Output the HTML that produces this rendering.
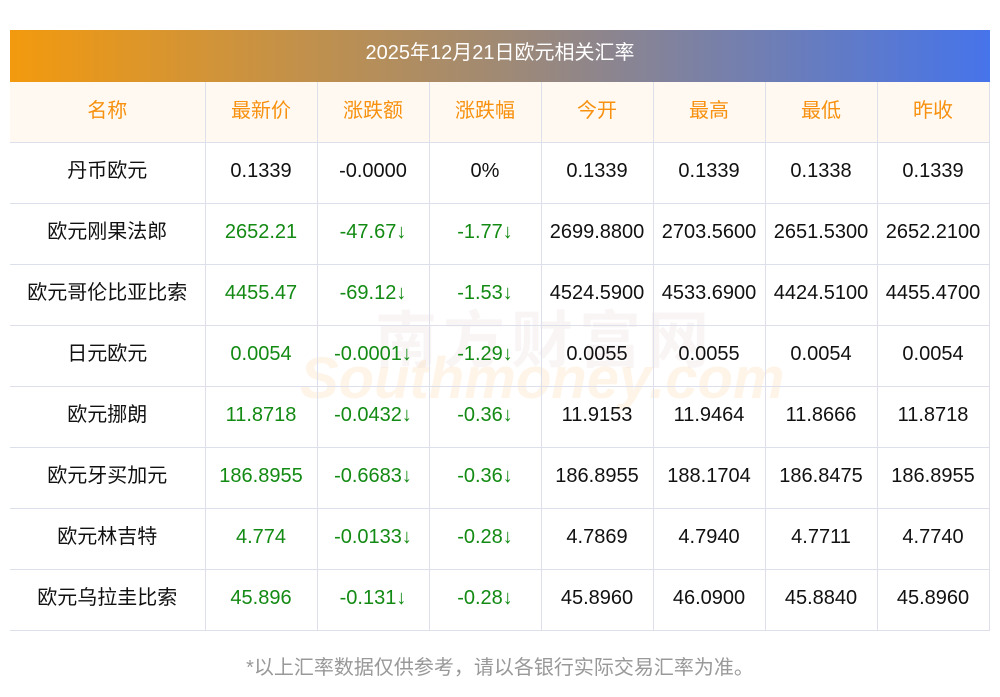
<!DOCTYPE html>
<html><head><meta charset="utf-8"><style>
body{margin:0;background:#fff;font-family:"Liberation Sans","Noto Sans CJK SC",sans-serif;width:1000px;height:697px;position:relative;overflow:hidden}
.title{position:absolute;left:10px;top:30px;width:980px;height:52px;background:linear-gradient(90deg,#f39a0e,#a08a74 50%,#4674ea);color:#fff;font-size:20px;line-height:46px;text-align:center}
table{position:absolute;left:10px;top:82px;border-collapse:collapse;width:979px;table-layout:fixed}
td{height:61px;border-right:1px solid #dde0ea;border-bottom:1px solid #dde0ea;text-align:center;font-size:20px;color:#111;padding:0 0 3px 0;white-space:nowrap;box-sizing:border-box}
td span{position:relative;top:-3px}
tr.h td{background:#fff9f2;color:#f7910f;height:60px;padding-bottom:0}
td.g{color:#138a13}
.wm{position:absolute;font-weight:bold;color:rgba(220,200,200,0.18);pointer-events:none}
.foot{position:absolute;top:651px;left:0;width:1000px;text-align:center;color:#999;font-size:20px}
</style></head><body>
<div class="title">2025年12月21日欧元相关汇率</div>
<div class="wm" style="left:375px;top:290px;font-size:62px;letter-spacing:6px">南方财富网</div>
<div class="wm" style="left:300px;top:345px;font-size:58px;font-style:italic;color:rgba(250,200,140,0.2)">Southmoney.com</div>
<table>
<colgroup><col style="width:195px"><col style="width:112px"><col style="width:112px"><col style="width:112px"><col style="width:112px"><col style="width:112px"><col style="width:112px"><col style="width:112px"></colgroup>
<tr class="h"><td><span>名称</span></td><td><span>最新价</span></td><td><span>涨跌额</span></td><td><span>涨跌幅</span></td><td><span>今开</span></td><td><span>最高</span></td><td><span>最低</span></td><td><span>昨收</span></td></tr>
<tr><td><span>丹币欧元</span></td><td>0.1339</td><td>-0.0000</td><td>0%</td><td>0.1339</td><td>0.1339</td><td>0.1338</td><td>0.1339</td></tr>
<tr><td><span>欧元刚果法郎</span></td><td class="g">2652.21</td><td class="g">-47.67↓</td><td class="g">-1.77↓</td><td>2699.8800</td><td>2703.5600</td><td>2651.5300</td><td>2652.2100</td></tr>
<tr><td><span>欧元哥伦比亚比索</span></td><td class="g">4455.47</td><td class="g">-69.12↓</td><td class="g">-1.53↓</td><td>4524.5900</td><td>4533.6900</td><td>4424.5100</td><td>4455.4700</td></tr>
<tr><td><span>日元欧元</span></td><td class="g">0.0054</td><td class="g">-0.0001↓</td><td class="g">-1.29↓</td><td>0.0055</td><td>0.0055</td><td>0.0054</td><td>0.0054</td></tr>
<tr><td><span>欧元挪朗</span></td><td class="g">11.8718</td><td class="g">-0.0432↓</td><td class="g">-0.36↓</td><td>11.9153</td><td>11.9464</td><td>11.8666</td><td>11.8718</td></tr>
<tr><td><span>欧元牙买加元</span></td><td class="g">186.8955</td><td class="g">-0.6683↓</td><td class="g">-0.36↓</td><td>186.8955</td><td>188.1704</td><td>186.8475</td><td>186.8955</td></tr>
<tr><td><span>欧元林吉特</span></td><td class="g">4.774</td><td class="g">-0.0133↓</td><td class="g">-0.28↓</td><td>4.7869</td><td>4.7940</td><td>4.7711</td><td>4.7740</td></tr>
<tr><td><span>欧元乌拉圭比索</span></td><td class="g">45.896</td><td class="g">-0.131↓</td><td class="g">-0.28↓</td><td>45.8960</td><td>46.0900</td><td>45.8840</td><td>45.8960</td></tr>
</table>
<div class="foot">*以上汇率数据仅供参考，请以各银行实际交易汇率为准。</div>
</body></html>
